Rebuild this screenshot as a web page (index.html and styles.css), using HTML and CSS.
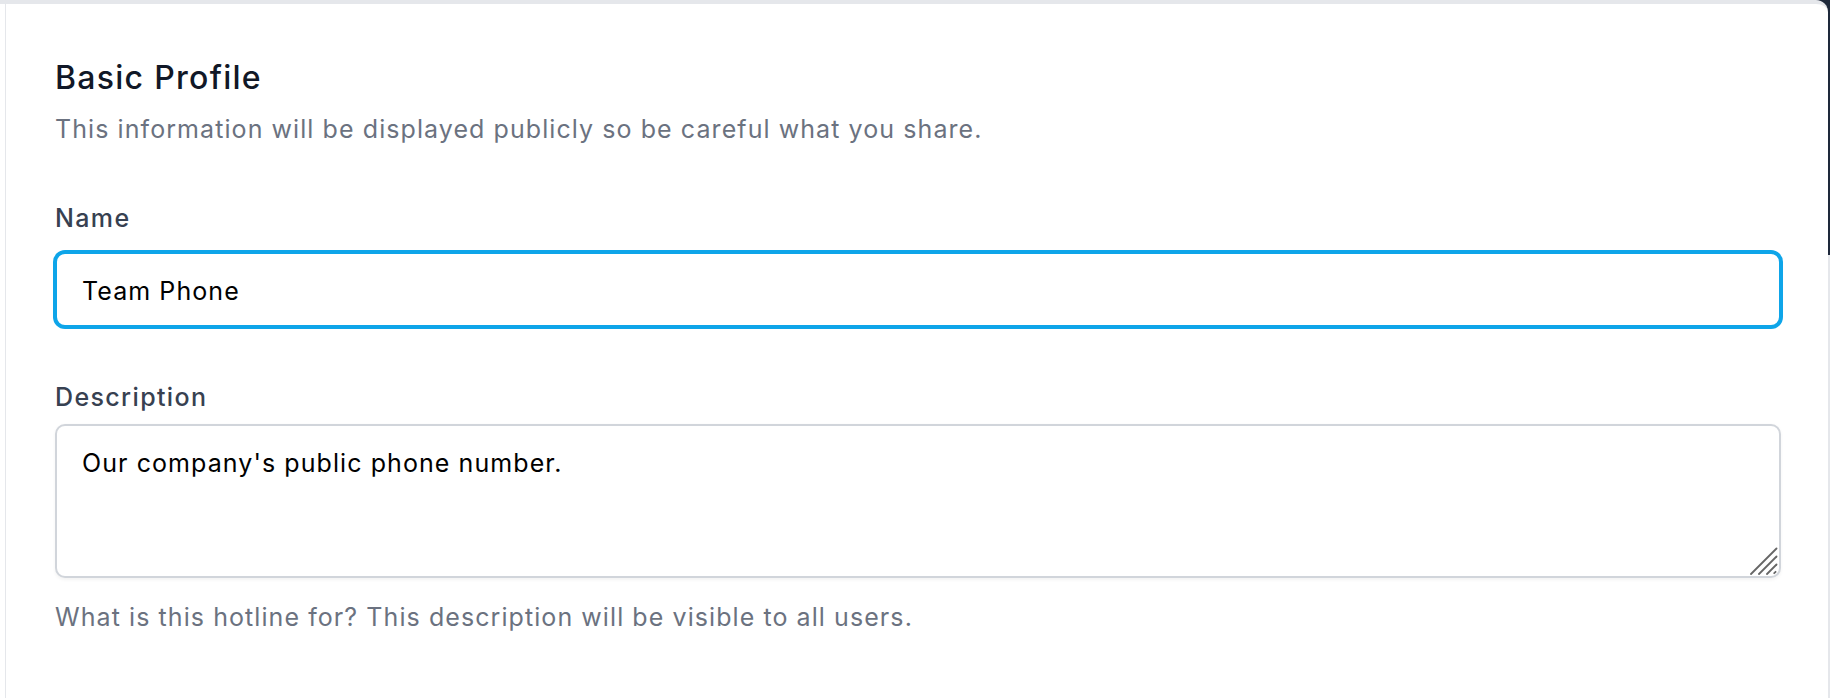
FILE: index.html
```html
<!DOCTYPE html>
<html lang="en">
<head>
<meta charset="utf-8">
<title>Basic Profile</title>
<link rel="stylesheet" href="styles.css">
</head>
<body>
<div class="shell">
  <section class="card">
    <h2 class="card-title">Basic Profile</h2>
    <p class="card-subtitle">This information will be displayed publicly so be careful what you share.</p>

    <div class="field field-name">
      <label class="field-label" for="name">Name</label>
      <input id="name" class="text-input is-focused" type="text" value="Team Phone">
    </div>

    <div class="field field-desc">
      <label class="field-label" for="desc">Description</label>
      <div class="textarea-wrap">
        <textarea id="desc" class="text-area">Our company's public phone number.</textarea>
        <svg class="resize-grip" width="28" height="28" viewBox="0 0 28 28" aria-hidden="true">
          <line x1="1" y1="27" x2="26.5" y2="1.5"/>
          <line x1="9" y1="27" x2="26.5" y2="9.5"/>
          <line x1="17" y1="27" x2="26.5" y2="17.5"/>
          <line x1="24.2" y1="26.2" x2="25.6" y2="24.8"/>
        </svg>
      </div>
      <p class="field-help">What is this hotline for? This description will be visible to all users.</p>
    </div>
  </section>
</div>
</body>
</html>
```

FILE: styles.css
```css
html, body {
  margin: 0;
  padding: 0;
  background: #ffffff;
}

body {
  font-family: Inter, "Noto Sans", "Liberation Sans", sans-serif;
  -webkit-font-smoothing: antialiased;
}

.shell {
  height: 698px;
  overflow: hidden;
  display: flex;
  background:
    linear-gradient(#1e293b, #1e293b) right top / 14px 255px no-repeat,
    linear-gradient(#e5e7eb, #e5e7eb) right top / 2px 100% no-repeat,
    linear-gradient(#e5e7eb, #e5e7eb) left top / 100% 4px no-repeat,
    #ffffff;
}

.card {
  flex: 1;
  margin-left: 5px;
  margin-right: 2px;
  border-top: 4px solid #e5e7eb;
  border-left: 1px solid #e5e7eb;
  border-top-right-radius: 12px;
  background: #ffffff;
  padding: 49px 47px 0 49px;
}

.card-title {
  margin: 0;
  font-size: 32px;
  line-height: 49px;
  font-weight: 500;
  color: #111827;
  letter-spacing: 0.04em;
}

.card-subtitle {
  margin: 10px 0 0;
  font-size: 25px;
  line-height: 35px;
  letter-spacing: 0.043em;
  color: #6b7280;
}

.field-name {
  margin-top: 54px;
}

.field-desc {
  margin-top: 53px;
}

.field-label {
  display: block;
  font-size: 25px;
  line-height: 35px;
  font-weight: 500;
  letter-spacing: 0.055em;
  color: #374151;
}

.text-input {
  display: block;
  box-sizing: border-box;
  width: 100%;
  height: 75px;
  margin: 16px 0 0;
  padding: 3px 25px 0;
  border: 2px solid #d1d5db;
  border-radius: 10px;
  background: #ffffff;
  font-family: inherit;
  font-size: 25px;
  letter-spacing: 0.043em;
  color: #000000;
  outline: none;
}

.text-input.is-focused {
  border-color: #0ea5e9;
  box-shadow: 0 0 0 2px #0ea5e9;
}

.textarea-wrap {
  position: relative;
  margin-top: 9px;
}

.text-area {
  display: block;
  box-sizing: border-box;
  width: 100%;
  height: 154px;
  margin: 0;
  padding: 20px 25px 0;
  border: 2px solid #d1d5db;
  border-radius: 10px;
  background: #ffffff;
  box-shadow: 0 1.75px 3.5px rgba(0, 0, 0, 0.05);
  font-family: inherit;
  font-size: 25px;
  line-height: 35px;
  letter-spacing: 0.043em;
  color: #000000;
  resize: none;
  outline: none;
}

.resize-grip {
  position: absolute;
  right: 3px;
  bottom: 3px;
  stroke: #666666;
  stroke-width: 1.8;
  stroke-linecap: round;
  fill: none;
}

.field-help {
  margin: 22px 0 0;
  font-size: 25px;
  line-height: 35px;
  letter-spacing: 0.043em;
  color: #6b7280;
}
```
